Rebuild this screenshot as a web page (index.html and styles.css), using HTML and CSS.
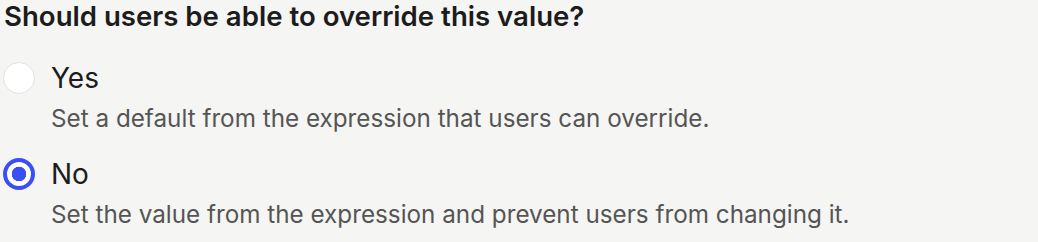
FILE: index.html
```html
<!doctype html>
<html lang="en">
	<head>
		<meta charset="UTF-8" />
		<title>Override setting</title>
		<link rel="stylesheet" href="styles.css">
	</head>
	<body>
		<fieldset class="question">
			<legend class="question-title">Should users be able to override this value?</legend>

			<label class="option">
				<input type="radio" name="override" value="yes" class="option-radio">
				<span class="option-text">
					<span class="option-label">Yes</span>
					<span class="option-desc">Set a default from the expression that users can override.</span>
				</span>
			</label>

			<label class="option">
				<input type="radio" name="override" value="no" class="option-radio" checked>
				<span class="option-text">
					<span class="option-label">No</span>
					<span class="option-desc">Set the value from the expression and prevent users from changing it.</span>
				</span>
			</label>
		</fieldset>
	</body>
</html>
```

FILE: styles.css
```css
body {
	margin: 0;
	background: #f5f5f3;
	font-family: Inter, "Noto Sans", sans-serif;
	color: #1c1c1c;
}
.question {
	margin: 0;
	padding: 12px 4px 0;
	border: none;
}
.question-title {
	padding: 0;
	font-size: 27.6px;
	font-weight: 600;
	line-height: 32px;
	margin-bottom: 18px;
}
.option {
	display: flex;
	gap: 16px;
	margin-bottom: 25px;
	cursor: pointer;
}
.option-radio {
	appearance: none;
	flex: none;
	width: 32px;
	height: 32px;
	margin: 0 0 0 -1px;
	border-radius: 50%;
	background: #fff;
	border: 1px solid #e2e2e0;
}
.option-radio:checked {
	border: 4px solid #3b4ef5;
	background: radial-gradient(circle, #3b4ef5 0 7px, #fff 7.5px);
}
.option-text {
	display: flex;
	flex-direction: column;
	gap: 11px;
}
.option-label {
	font-size: 28px;
	line-height: 32px;
}
.option-desc {
	font-size: 24.25px;
	line-height: 28px;
	color: #555;
}
```
